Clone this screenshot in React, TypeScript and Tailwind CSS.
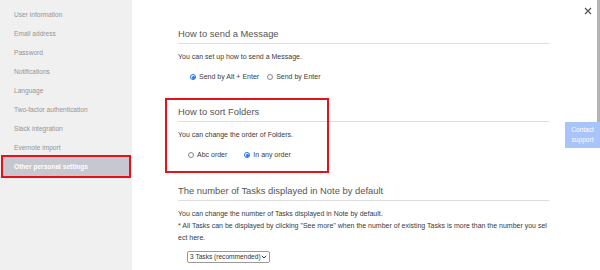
import React, { useState } from 'react';

const NAV_ITEMS = [
  'User information',
  'Email address',
  'Password',
  'Notifications',
  'Language',
  'Two-factor authentication',
  'Slack integration',
  'Evernote import',
  'Other personal settings',
];

function Radio({ checked, label, onClick }: { checked: boolean; label: string; onClick: () => void }) {
  return (
    <button onClick={onClick} className="flex items-center gap-[3px] text-[7px] leading-[10px] text-[#3a3a3a]">
      <span
        className={`w-[6px] h-[6px] rounded-full border flex items-center justify-center ${
          checked ? 'border-[#1a73e8] bg-white' : 'border-[#888] bg-white'
        }`}
      >
        {checked && <span className="w-[3px] h-[3px] rounded-full bg-[#1a73e8]" />}
      </span>
      {label}
    </button>
  );
}

function SectionTitle({ children }: { children: React.ReactNode }) {
  return (
    <h2 className="text-[9.4px] leading-[12px] text-[#555] pb-[3px] border-b border-[#dedede]">{children}</h2>
  );
}

export default function App() {
  const [sendMode, setSendMode] = useState<'alt' | 'enter'>('alt');
  const [sortMode, setSortMode] = useState<'abc' | 'any'>('any');
  const active = 'Other personal settings';

  return (
    <div
      className="relative w-[600px] h-[270px] overflow-hidden bg-white flex"
      style={{ fontFamily: '"Liberation Sans", Arial, sans-serif' }}
    >
      {/* Sidebar */}
      <div className="w-[132px] shrink-0 bg-[#f0f0f0] pt-[5px] flex flex-col">
        {NAV_ITEMS.map((item) => (
          <div
            key={item}
            className={`ml-[3px] w-[126px] h-[19px] flex items-center pl-[11px] text-[6.6px] ${
              item === active
                ? 'bg-[#c6c7cf] text-white font-bold outline-2 outline-[#e8111b]'
                : 'text-[#959595]'
            }`}
          >
            {item}
          </div>
        ))}
      </div>

      {/* Main */}
      <div className="ml-[46px] w-[371px] pt-[28px]">
        <SectionTitle>How to send a Message</SectionTitle>
        <p className="mt-[8px] text-[7px] leading-[10px] text-[#3a3a3a]">You can set up how to send a Message.</p>
        <div className="mt-[10px] ml-[12px] flex gap-[8px]">
          <Radio checked={sendMode === 'alt'} label="Send by Alt + Enter" onClick={() => setSendMode('alt')} />
          <Radio checked={sendMode === 'enter'} label="Send by Enter" onClick={() => setSendMode('enter')} />
        </div>

        <div className="relative mt-[24px]">
          <div className="absolute left-[-13px] top-[-8px] w-[164px] h-[75px] border-2 border-[#e8111b] pointer-events-none" />
          <SectionTitle>How to sort Folders</SectionTitle>
          <p className="mt-[8px] text-[7px] leading-[10px] text-[#3a3a3a]">You can change the order of Folders.</p>
          <div className="mt-[10px] ml-[10px] flex gap-[17px]">
            <Radio checked={sortMode === 'abc'} label="Abc order" onClick={() => setSortMode('abc')} />
            <Radio checked={sortMode === 'any'} label="In any order" onClick={() => setSortMode('any')} />
          </div>
        </div>

        <div className="mt-[25px]">
          <SectionTitle>The number of Tasks displayed in Note by default</SectionTitle>
          <p className="mt-[7px] text-[7px] leading-[12px] text-[#3a3a3a] break-all">
            You can change the number of Tasks displayed in Note by default.
            <br />* All Tasks can be displayed by clicking "See more" when the number of existing Tasks is more than the number you select here.
          </p>
          <div className="mt-[7px] ml-[9px] w-[83px] h-[12px] border border-[#999] rounded-[2px] flex items-center justify-between px-[2px] text-[6.6px] text-[#333]">
            <span>3 Tasks (recommended)</span>
            <svg width="6" height="4" viewBox="0 0 6 4" fill="none" stroke="#333" strokeWidth="1">
              <path d="M0.8 0.8 L3 3 L5.2 0.8" />
            </svg>
          </div>
        </div>
      </div>

      {/* Close */}
      <button className="absolute right-[8px] top-[7px] w-[8px] h-[8px] flex items-center justify-center">
        <svg width="8" height="8" viewBox="0 0 8 8" stroke="#555" strokeWidth="1.2">
          <path d="M1 1 L7 7 M7 1 L1 7" />
        </svg>
      </button>

      {/* Scrollbar */}
      <div className="absolute right-0 top-0 w-[3px] h-[122px] bg-[#b3b3b3]" />

      {/* Contact support */}
      <div className="absolute right-0 top-[122px] w-[35px] h-[26px] bg-[#a9c3fb] flex flex-col items-center justify-center text-white text-[6.6px] leading-[10px]">
        <span>Contact</span>
        <span>support</span>
      </div>
    </div>
  );
}
